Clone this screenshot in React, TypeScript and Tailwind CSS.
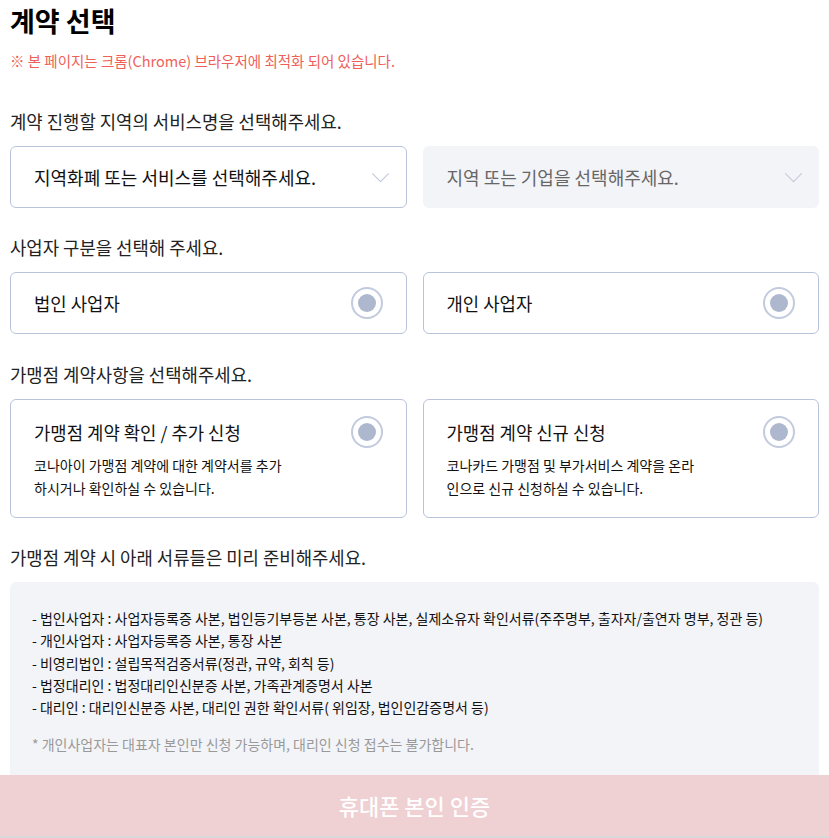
import { useState } from "react";

const FONT = "[font-family:'Noto_Sans_CJK_KR','Noto_Sans',sans-serif]";

function Chevron() {
  return (
    <svg className="w-[19px] h-[11px]" viewBox="0 0 20 12" fill="none">
      <path d="M1 1.5l9 9 9-9" stroke="#c3cad9" strokeWidth={1.2} />
    </svg>
  );
}

function Radio() {
  return (
    <span className="w-[32px] h-[32px] rounded-full border-2 border-[#c2cbdd] flex items-center justify-center bg-white">
      <span className="w-[18px] h-[18px] rounded-full bg-[#adb8cf]" />
    </span>
  );
}

function Label({ children }: { children: React.ReactNode }) {
  return <p className="text-[17.8px] text-[#222] leading-[24px] mb-[13px]">{children}</p>;
}

export default function App() {
  const [biz, setBiz] = useState<string | null>(null);

  const docs = [
    "- 법인사업자 : 사업자등록증 사본, 법인등기부등본 사본, 통장 사본, 실제소유자 확인서류(주주명부, 출자자/출연자 명부, 정관 등)",
    "- 개인사업자 : 사업자등록증 사본, 통장 사본",
    "- 비영리법인 : 설립목적검증서류(정관, 규약, 회칙 등)",
    "- 법정대리인 : 법정대리인신분증 사본, 가족관계증명서 사본",
    "- 대리인 : 대리인신분증 사본, 대리인 권한 확인서류( 위임장, 법인인감증명서 등)",
  ];

  return (
    <div className={`${FONT} min-h-screen bg-white px-[10px] pb-[80px]`}>
      {/* Title */}
      <h1 className="text-[27px] font-bold text-black leading-[36px] pt-[3px]">계약 선택</h1>
      <p className="text-[14.5px] text-[#ef5f5a] leading-[20px] mt-[12px]">
        ※ 본 페이지는 크롬(Chrome) 브라우저에 최적화 되어 있습니다.
      </p>

      {/* Region */}
      <div className="mt-[38px]">
        <Label>계약 진행할 지역의 서비스명을 선택해주세요.</Label>
        <div className="grid grid-cols-2 gap-[16px]">
          <button className="h-[62px] rounded-[6px] border border-[#b9c3da] bg-white pl-[23px] pr-[16px] flex items-center justify-between text-[18px] text-[#111]">
            <span>지역화폐 또는 서비스를 선택해주세요.</span>
            <Chevron />
          </button>
          <button className="h-[62px] rounded-[6px] bg-[#f3f4f8] pl-[24px] pr-[16px] flex items-center justify-between text-[18px] text-[#666]">
            <span>지역 또는 기업을 선택해주세요.</span>
            <Chevron />
          </button>
        </div>
      </div>

      {/* Business type */}
      <div className="mt-[27px]">
        <Label>사업자 구분을 선택해 주세요.</Label>
        <div className="grid grid-cols-2 gap-[16px]">
          {["법인 사업자", "개인 사업자"].map((t) => (
            <button
              key={t}
              onClick={() => setBiz(t)}
              className={`h-[62px] rounded-[6px] border ${biz === t ? "border-[#e56b6f]" : "border-[#b9c3da]"} bg-white pl-[23px] pr-[23px] flex items-center justify-between text-[17.8px] text-[#111]`}
            >
              <span>{t}</span>
              <Radio />
            </button>
          ))}
        </div>
      </div>

      {/* Contract type */}
      <div className="mt-[28px]">
        <Label>가맹점 계약사항을 선택해주세요.</Label>
        <div className="grid grid-cols-2 gap-[16px]">
          {[
            {
              t: "가맹점 계약 확인 / 추가 신청",
              d: ["코나아이 가맹점 계약에 대한 계약서를 추가", "하시거나 확인하실 수 있습니다."],
            },
            {
              t: "가맹점 계약 신규 신청",
              d: ["코나카드 가맹점 및 부가서비스 계약을 온라", "인으로 신규 신청하실 수 있습니다."],
            },
          ].map((c) => (
            <div
              key={c.t}
              className="h-[119px] rounded-[6px] border border-[#b9c3da] bg-white pl-[23px] pr-[23px] pt-[16px] flex justify-between"
            >
              <div>
                <p className="text-[17.8px] text-[#111] leading-[32px]">{c.t}</p>
                <p className="text-[14px] text-[#111] leading-[23px] mt-[6px]">
                  {c.d[0]}
                  <br />
                  {c.d[1]}
                </p>
              </div>
              <div>
                <Radio />
              </div>
            </div>
          ))}
        </div>
      </div>

      {/* Documents */}
      <div className="mt-[27px]">
        <Label>가맹점 계약 시 아래 서류들은 미리 준비해주세요.</Label>
        <div className="rounded-[6px] bg-[#f3f4f8] px-[22px] pt-[25px] pb-[30px]">
          <ul className="text-[14px] text-[#111] leading-[22.3px]">
            {docs.map((d) => (
              <li key={d}>{d}</li>
            ))}
          </ul>
          <p className="text-[14px] text-[#999] leading-[20px] mt-[16px]">
            * 개인사업자는 대표자 본인만 신청 가능하며, 대리인 신청 접수는 불가합니다.
          </p>
        </div>
      </div>

      {/* Bottom CTA */}
      <button className="fixed bottom-0 left-0 right-0 h-[63px] bg-[#efd0d3] border-b-2 border-[#d9d9d9] text-white text-[22px] font-medium flex items-center justify-center">
        휴대폰 본인 인증
      </button>
    </div>
  );
}
